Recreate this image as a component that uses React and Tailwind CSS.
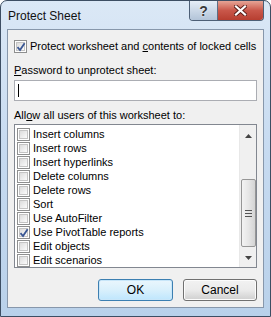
import React from 'react';

const font = { fontFamily: '"Liberation Sans", Arial, sans-serif' };

function Check({ checked }) {
  return (
    <span className="relative inline-flex h-[13px] w-[13px] shrink-0 items-center justify-center border border-[#8e8f8f] bg-white">
      <span className="h-[9px] w-[9px] border border-[#c4c4c4] bg-gradient-to-br from-[#dcdcdc] to-[#fbfbfb]" />
      {checked && (
        <svg className="absolute left-[1px] top-[1px]" width="10" height="10" viewBox="0 0 10 10">
          <path d="M1.5 5.2 L4 8 L8.6 1.2" fill="none" stroke="#3a5794" strokeWidth="1.8" />
        </svg>
      )}
    </span>
  );
}

const items = [
  ['Insert columns', false],
  ['Insert rows', false],
  ['Insert hyperlinks', false],
  ['Delete columns', false],
  ['Delete rows', false],
  ['Sort', false],
  ['Use AutoFilter', false],
  ['Use PivotTable reports', true],
  ['Edit objects', false],
  ['Edit scenarios', false],
];

export default function App() {
  return (
    <div
      className="flex h-[317px] w-[271px] flex-col overflow-hidden rounded-t-[7px] border border-[#3d4e63] bg-gradient-to-b from-[#dbe8f6] via-[#c6daf0] to-[#b9d1ea] text-[11px] text-black"
      style={font}
    >
      {/* title bar */}
      <div className="flex h-[28px] shrink-0 items-start justify-between">
        <span className="pl-[7px] pt-[8px] text-[12px] leading-[15px] text-[#111]">Protect Sheet</span>
        <div className="mr-[6px] flex h-[20px] overflow-hidden rounded-b-[4px] border border-t-0 border-[#4d5f76]">
          <div className="flex w-[28px] items-center justify-center border-r border-[#5c6e85] bg-gradient-to-b from-[#e6eef7] via-[#cbd8e7] to-[#b3c4d8]">
            <span className="text-[14px] font-bold leading-none text-[#3a3a3a] [text-shadow:0_0_2px_#fff]">?</span>
          </div>
          <div className="flex w-[45px] items-center justify-center bg-gradient-to-b from-[#e5a496] via-[#c9574a] to-[#b73e30]">
            <svg width="13" height="11" viewBox="0 0 13 11">
              <path d="M2 1.5 L11 9.5 M11 1.5 L2 9.5" stroke="#5a1f1a" strokeWidth="4" strokeLinecap="square" />
              <path d="M2 1.5 L11 9.5 M11 1.5 L2 9.5" stroke="#ffffff" strokeWidth="2.2" strokeLinecap="square" />
            </svg>
          </div>
        </div>
      </div>

      {/* client area */}
      <div className="mx-[6px] mb-[8px] flex flex-1 flex-col border border-[#8797ab] bg-[#f0f0f0] px-[6px] pt-[9px]">
        <label className="flex items-center gap-[3px] whitespace-nowrap">
          <Check checked />
          <span className="leading-[14px]">
            Protect worksheet and <u>c</u>ontents of locked cells
          </span>
        </label>

        <div className="mt-[10px] whitespace-nowrap leading-[14px]">
          <u>P</u>assword to unprotect sheet:
        </div>
        <div className="mt-[3px] flex h-[21px] shrink-0 items-center border border-[#abadb3] bg-white pl-[3px]">
          <span className="h-[13px] w-[1px] bg-black" />
        </div>

        <div className="mt-[7px] whitespace-nowrap leading-[14px]">
          All<u>o</u>w all users of this worksheet to:
        </div>
        <div className="mt-[2px] flex h-[144px] shrink-0 border border-[#828790] bg-white">
          <div className="flex flex-1 flex-col pl-[2px] pt-[2px]">
            {items.map(([label, on]) => (
              <div key={label} className="flex h-[14px] items-center gap-[3px] whitespace-nowrap">
                <Check checked={on} />
                <span className="leading-[14px]">{label}</span>
              </div>
            ))}
          </div>
          <div className="flex w-[17px] flex-col items-center border-l border-[#e8e8e8] bg-[#f0f0f0]">
            <div className="flex h-[17px] w-full items-center justify-center pt-[4px]">
              <svg width="7" height="4" viewBox="0 0 7 4">
                <path d="M0 4 L3.5 0 L7 4 Z" fill="#444" />
              </svg>
            </div>
            <div className="h-[37px]" />
            <div className="flex h-[68px] w-[15px] flex-col items-center justify-center gap-[2px] rounded-[2px] border border-[#969696] bg-gradient-to-r from-[#f3f3f3] via-[#e6e6e6] to-[#d4d4d4]">
              <span className="h-[1px] w-[7px] bg-[#555]" />
              <span className="h-[1px] w-[7px] bg-[#555]" />
              <span className="h-[1px] w-[7px] bg-[#555]" />
            </div>
            <div className="flex flex-1 items-center justify-center pt-[2px]">
              <svg width="7" height="4" viewBox="0 0 7 4">
                <path d="M0 0 L3.5 4 L7 0 Z" fill="#444" />
              </svg>
            </div>
          </div>
        </div>

        <div className="mt-[11px] flex justify-end gap-[10px]">
          <button className="h-[22px] w-[75px] rounded-[3px] border border-[#3c7fb1] bg-gradient-to-b from-[#eaf6fd] via-[#d9f0fc] to-[#bee6fd] text-[12px] shadow-[inset_0_0_0_1px_#c8e6f9]">
            OK
          </button>
          <button className="h-[22px] w-[74px] rounded-[3px] border border-[#707070] bg-gradient-to-b from-[#f2f2f2] via-[#ebebeb] to-[#cfcfcf] text-[12px] shadow-[inset_0_0_0_1px_#fcfcfc]">
            Cancel
          </button>
        </div>
      </div>
    </div>
  );
}
